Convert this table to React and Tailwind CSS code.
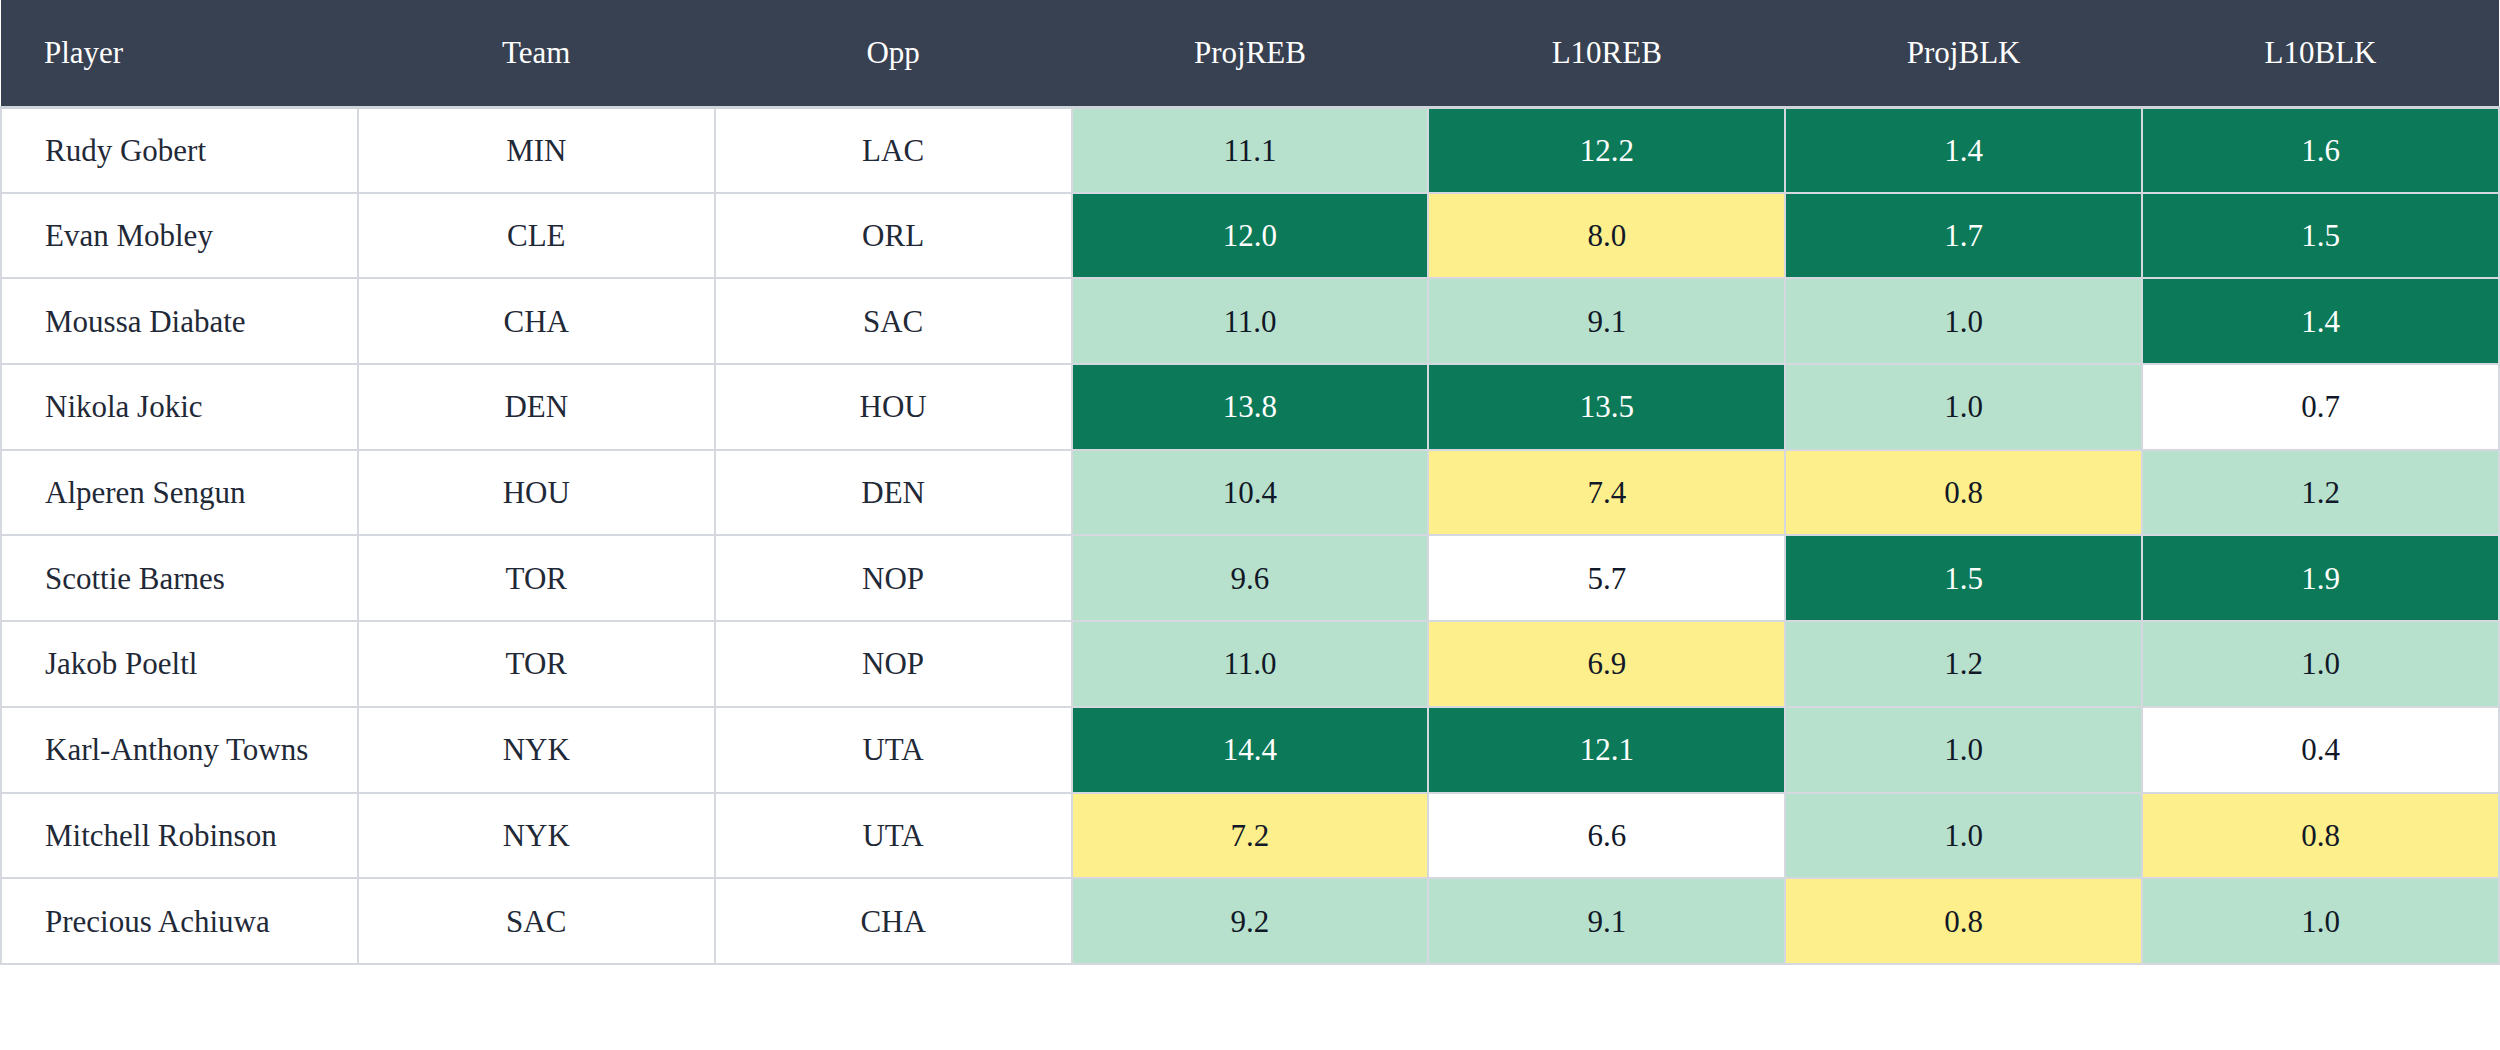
import React from "react";

const G = "bg-[#0c7a58] text-white";
const L = "bg-[#b7e1cd] text-[#111827]";
const Y = "bg-[#fdef8b] text-[#111827]";
const W = "bg-white text-[#111827]";

const rows = [
  ["Rudy Gobert", "MIN", "LAC", ["11.1", L], ["12.2", G], ["1.4", G], ["1.6", G]],
  ["Evan Mobley", "CLE", "ORL", ["12.0", G], ["8.0", Y], ["1.7", G], ["1.5", G]],
  ["Moussa Diabate", "CHA", "SAC", ["11.0", L], ["9.1", L], ["1.0", L], ["1.4", G]],
  ["Nikola Jokic", "DEN", "HOU", ["13.8", G], ["13.5", G], ["1.0", L], ["0.7", W]],
  ["Alperen Sengun", "HOU", "DEN", ["10.4", L], ["7.4", Y], ["0.8", Y], ["1.2", L]],
  ["Scottie Barnes", "TOR", "NOP", ["9.6", L], ["5.7", W], ["1.5", G], ["1.9", G]],
  ["Jakob Poeltl", "TOR", "NOP", ["11.0", L], ["6.9", Y], ["1.2", L], ["1.0", L]],
  ["Karl-Anthony Towns", "NYK", "UTA", ["14.4", G], ["12.1", G], ["1.0", L], ["0.4", W]],
  ["Mitchell Robinson", "NYK", "UTA", ["7.2", Y], ["6.6", W], ["1.0", L], ["0.8", Y]],
  ["Precious Achiuwa", "SAC", "CHA", ["9.2", L], ["9.1", L], ["0.8", Y], ["1.0", L]],
];

const headers = ["Player", "Team", "Opp", "ProjREB", "L10REB", "ProjBLK", "L10BLK"];

export default function App() {
  return (
    <div className="w-[2500px] h-[1050px] bg-white font-['Liberation_Serif',serif] text-[31px] leading-none">
      <table className="w-full table-fixed border-collapse">
        <thead>
          <tr className="h-[107px] bg-[#384152] text-white">
            {headers.map((h, i) => (
              <th
                key={h}
                className={`font-normal border-b-[3px] border-[#cfd3da] ${i === 0 ? "text-left pl-[43px]" : "text-center"}`}
              >
                {h}
              </th>
            ))}
          </tr>
        </thead>
        <tbody>
          {rows.map((r) => (
            <tr key={r[0]} className="h-[85.7px]">
              <td className="border-2 border-[#d5d9df] pl-[43px] text-[#1f2937] bg-white">{r[0]}</td>
              <td className="border-2 border-[#d5d9df] text-center text-[#1f2937] bg-white">{r[1]}</td>
              <td className="border-2 border-[#d5d9df] text-center text-[#1f2937] bg-white">{r[2]}</td>
              {r.slice(3).map(([v, c], j) => (
                <td key={j} className={`border-2 border-[#d5d9df] text-center ${c}`}>
                  {v}
                </td>
              ))}
            </tr>
          ))}
        </tbody>
      </table>
    </div>
  );
}
